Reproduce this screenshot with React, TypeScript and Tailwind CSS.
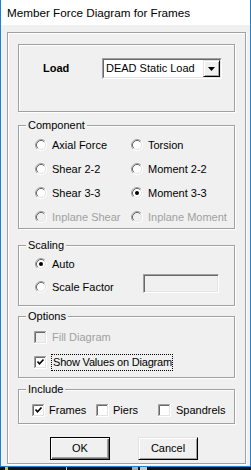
import React from 'react';

const etched = 'border border-[#a0a0a0] shadow-[inset_1px_1px_0_#fff,1px_1px_0_#fff]';

function Radio({ checked = false, disabled = false }: { checked?: boolean; disabled?: boolean }) {
  return (
    <svg width="12" height="12" viewBox="0 0 12 12" className="shrink-0">
      <circle cx="6" cy="6" r="4" fill={disabled ? '#f0f0f0' : '#fff'} />
      <path d="M2.11 9.89A5.5 5.5 0 0 1 9.89 2.11" fill="none" stroke="#a0a0a0" />
      <path d="M9.89 2.11A5.5 5.5 0 0 1 2.11 9.89" fill="none" stroke="#fff" />
      <path d="M2.82 9.18A4.5 4.5 0 0 1 9.18 2.82" fill="none" stroke="#696969" />
      <path d="M9.18 2.82A4.5 4.5 0 0 1 2.82 9.18" fill="none" stroke="#e3e3e3" />
      {checked && <circle cx="6" cy="6" r="2" fill="#000" />}
    </svg>
  );
}

function Check({ checked = false, disabled = false }: { checked?: boolean; disabled?: boolean }) {
  return (
    <svg width="13" height="13" viewBox="0 0 13 13" className="shrink-0">
      <rect x="2" y="2" width="9" height="9" fill={disabled ? '#f0f0f0' : '#fff'} />
      <path d="M0.5 12V0.5H12" fill="none" stroke="#a0a0a0" />
      <path d="M1.5 11V1.5H11" fill="none" stroke="#696969" />
      <path d="M0 12.5H12.5V0" fill="none" stroke="#fff" />
      <path d="M1 11.5H11.5V1" fill="none" stroke="#e3e3e3" />
      {checked && (
        <path d="M3.5 5.5L5.5 7.8L9.5 3.5" fill="none" stroke="#000" strokeWidth="1.6" />
      )}
    </svg>
  );
}

function Group({
  label,
  className,
  children,
}: {
  label: string;
  className: string;
  children: React.ReactNode;
}) {
  return (
    <div className={`relative mx-[10px] ${etched} ${className}`}>
      <span className="absolute left-[7px] -top-[7px] px-[2px] bg-[#f0f0f0] leading-[13px]">
        {label}
      </span>
      {children}
    </div>
  );
}

function RadioItem({
  label,
  checked,
  disabled,
  className = '',
}: {
  label: string;
  checked?: boolean;
  disabled?: boolean;
  className?: string;
}) {
  return (
    <div className={`flex items-center gap-[5px] h-[16px] ${disabled ? 'text-[#a0a0a0]' : ''} ${className}`}>
      <Radio checked={checked} disabled={disabled} />
      <span className="whitespace-nowrap">{label}</span>
    </div>
  );
}

export default function App() {
  return (
    <div className="w-[251px] h-[470px] flex flex-col bg-[#101010] font-['Liberation_Sans',Arial,sans-serif] text-[11px] text-black">
      <div className="flex-1 flex flex-col border-x border-b border-[#1883d7] bg-[#f0f0f0]">
        <div className="h-[25px] shrink-0 bg-white pl-[6px] flex items-center text-[11.7px]">
          Member Force Diagram for Frames
        </div>

        <div className="pt-[7px] pl-[6px]">
          <div className={`w-[239px] h-[432px] flex flex-col ${etched}`}>
            {/* Load */}
            <div className={`mx-[10px] mt-[11px] h-[68px] pt-[13px] pl-[24px] ${etched}`}>
              <div className="flex items-center">
                <span className="w-[59px] font-bold">Load</span>
                <div className="w-[120px] h-[21px] flex items-center bg-white border border-t-[#a0a0a0] border-l-[#a0a0a0] border-b-white border-r-white">
                  <div className="flex-1 h-full flex items-center border border-t-[#696969] border-l-[#696969] border-b-[#e3e3e3] border-r-[#e3e3e3]">
                    <span className="pl-[2px] flex-1">DEAD Static Load</span>
                    <div className="w-[17px] h-full bg-[#f0f0f0] flex items-center justify-center border border-t-[#e3e3e3] border-l-[#e3e3e3] border-b-[#000] border-r-[#000] shadow-[inset_1px_1px_0_#fff,inset_-1px_-1px_0_#a0a0a0]">
                      <svg width="7" height="4" viewBox="0 0 7 4">
                        <path d="M0 0H7L3.5 4Z" fill="#000" />
                      </svg>
                    </div>
                  </div>
                </div>
              </div>
            </div>

            {/* Component */}
            <Group label="Component" className="mt-[13px] h-[104px] pt-[11px] pl-[16px]">
              <div className="flex flex-col gap-[8px]">
                <div className="flex">
                  <RadioItem label="Axial Force" className="w-[96px]" />
                  <RadioItem label="Torsion" />
                </div>
                <div className="flex">
                  <RadioItem label="Shear 2-2" className="w-[96px]" />
                  <RadioItem label="Moment 2-2" />
                </div>
                <div className="flex">
                  <RadioItem label="Shear 3-3" className="w-[96px]" />
                  <RadioItem label="Moment 3-3" checked />
                </div>
                <div className="flex">
                  <RadioItem label="Inplane Shear" disabled className="w-[96px]" />
                  <RadioItem label="Inplane Moment" disabled />
                </div>
              </div>
            </Group>

            {/* Scaling */}
            <Group label="Scaling" className="mt-[16px] h-[61px] pt-[10px] pl-[16px] pr-[15px]">
              <div className="flex flex-col gap-[7px]">
                <RadioItem label="Auto" checked />
                <div className="flex items-start">
                  <RadioItem label="Scale Factor" />
                  <div className="ml-auto -mt-[5px] w-[76px] h-[19px] bg-[#f0f0f0] border border-t-[#a0a0a0] border-l-[#a0a0a0] border-b-white border-r-white shadow-[inset_1px_1px_0_#696969,inset_-1px_-1px_0_#e3e3e3]" />
                </div>
              </div>
            </Group>

            {/* Options */}
            <Group label="Options" className="mt-[10px] h-[62px] pt-[12px] pl-[15px]">
              <div className="flex flex-col gap-[9px]">
                <div className="flex items-center h-[16px] gap-[5px] text-[#a0a0a0]">
                  <Check disabled />
                  <span>Fill Diagram</span>
                </div>
                <div className="flex items-center h-[16px] gap-[4px]">
                  <Check checked />
                  <span className="h-[17px] w-[122px] flex items-center pl-[1px] border border-dotted border-black whitespace-nowrap overflow-hidden tracking-[-0.2px]">
                    Show Values on Diagram
                  </span>
                </div>
              </div>
            </Group>

            {/* Include */}
            <Group label="Include" className="mt-[11px] h-[35px] pt-[12px] pl-[13px]">
              <div className="flex">
                <div className="w-[64px] flex items-center h-[16px] gap-[4px]">
                  <Check checked />
                  <span>Frames</span>
                </div>
                <div className="w-[62px] flex items-center h-[16px] gap-[4px]">
                  <Check />
                  <span>Piers</span>
                </div>
                <div className="flex items-center h-[16px] gap-[5px]">
                  <Check />
                  <span>Spandrels</span>
                </div>
              </div>
            </Group>

            {/* Buttons */}
            <div className="mt-[13px] pl-[42px] flex gap-[28px]">
              <button className="w-[60px] h-[23px] bg-[#f0f0f0] border border-black shadow-[inset_1px_1px_0_#fff,inset_-1px_-1px_0_#696969,inset_-2px_-2px_0_#a0a0a0]">
                OK
              </button>
              <button className="w-[60px] h-[23px] bg-[#f0f0f0] border border-t-[#e3e3e3] border-l-[#e3e3e3] border-b-black border-r-black shadow-[inset_1px_1px_0_#fff,inset_-1px_-1px_0_#a0a0a0]">
                Cancel
              </button>
            </div>
          </div>
        </div>
      </div>
      <div className="h-[3px] shrink-0 flex">
        <div className="ml-[5px] w-[3px] bg-[#d8c020]" />
        <div className="ml-[58px] w-[1px] bg-[#c0c0c0]" />
        <div className="ml-[65px] w-[6px] bg-[#a8a8a8]" />
        <div className="ml-[2px] w-[7px] bg-[#c8c8c8]" />
      </div>
    </div>
  );
}
